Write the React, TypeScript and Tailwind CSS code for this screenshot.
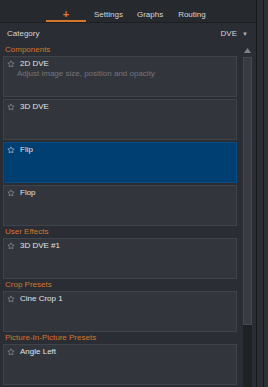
import React from "react";

const Star = ({ color = "#8b8e94" }: { color?: string }) => (
  <svg width="8" height="8" viewBox="0 0 24 24" fill="none" stroke={color} strokeWidth="2.2" strokeLinejoin="round">
    <path d="M12 2.5l2.9 6.1 6.6.8-4.9 4.6 1.3 6.6L12 17.3l-5.9 3.3 1.3-6.6-4.9-4.6 6.6-.8z" />
  </svg>
);

const Card = ({ title, desc, selected }: { title: string; desc?: string; selected?: boolean }) => (
  <div
    className={
      "h-[41px] shrink-0 border pl-[3px] pt-[2px] " +
      (selected ? "bg-[#003f72] border-[#0a4a82]" : "bg-[#32353c] border-[#3f434a]")
    }
  >
    <div className="flex items-center gap-[5px] h-[10px]">
      <Star color={selected ? "#a9b9cc" : "#8b8e94"} />
      <span className="text-[8px] leading-[10px] text-[#e2e2e2]">{title}</span>
    </div>
    {desc && <div className="pl-[10px] text-[8px] leading-[10px] text-[#72767c]">{desc}</div>}
  </div>
);

const Label = ({ children, first }: { children: React.ReactNode; first?: boolean }) => (
  <div
    className={
      "shrink-0 pl-[2px] text-[8px] leading-[10px] text-[#d4762c] " + (first ? "h-[11px]" : "h-[12px] pt-[1px]")
    }
  >
    {children}
  </div>
);

export default function App() {
  return (
    <div
      className="w-[268px] h-[387px] overflow-hidden flex bg-[#2a2d33]"
      style={{ fontFamily: '"Liberation Sans", Arial, sans-serif' }}
    >
      <div className="w-[256px] flex flex-col">
        <div className="h-[23px] shrink-0 bg-[#26292e] border-b border-[#1c1e22] flex">
          <div className="flex h-[22px] text-[8px] leading-[10px] text-[#d6d6d6]">
            <div className="ml-[46px] w-[40px] h-full flex justify-center pt-[9px] border-b-[2px] border-[#d4762c] text-[#e07a2c] font-bold text-[11px] leading-[11px]">+</div>
            <div className="ml-[8px] h-full pt-[10px]">Settings</div>
            <div className="ml-[14px] h-full pt-[10px]">Graphs</div>
            <div className="ml-[15px] h-full pt-[10px]">Routing</div>
          </div>
        </div>
        <div className="h-[22px] shrink-0 flex items-center justify-between pl-[7px] pr-[8px] text-[8px] text-[#d6d6d6]">
          <span>Category</span>
          <span className="flex items-center gap-[5px]">
            DVE
            <span className="text-[6px] text-[#aeb1b6]">▼</span>
          </span>
        </div>
        <div className="flex flex-1 min-h-0">
          <div className="w-[237px] pl-[3px] flex flex-col">
            <Label first>Components</Label>
            <div className="flex flex-col gap-[2px]">
              <Card title="2D DVE" desc="Adjust image size, position and opacity" />
              <Card title="3D DVE" />
              <Card title="Flip" selected />
              <Card title="Flop" />
            </div>
            <Label>User Effects</Label>
            <Card title="3D DVE #1" />
            <Label>Crop Presets</Label>
            <Card title="Cine Crop 1" />
            <Label>Picture-In-Picture Presets</Label>
            <Card title="Angle Left" />
          </div>
          <div className="ml-[6px] w-[9px] flex flex-col">
            <div className="h-[12px] flex items-center justify-center pb-[2px]">
              <svg width="7" height="5" viewBox="0 0 7 5"><path d="M3.5 0L7 5H0z" fill="#7d8086" /></svg>
            </div>
            <div className="h-[268px] bg-[#383b42] border border-[#44484f]" />
            <div className="flex-1 bg-[#1f2125]" />
          </div>
        </div>
      </div>
      <div className="w-px bg-[#17191c]" />
      <div className="w-[6px] bg-[#2b2e33]" />
      <div className="w-px bg-[#17191c]" />
      <div className="flex-1 bg-[#2d3035]" />
    </div>
  );
}
